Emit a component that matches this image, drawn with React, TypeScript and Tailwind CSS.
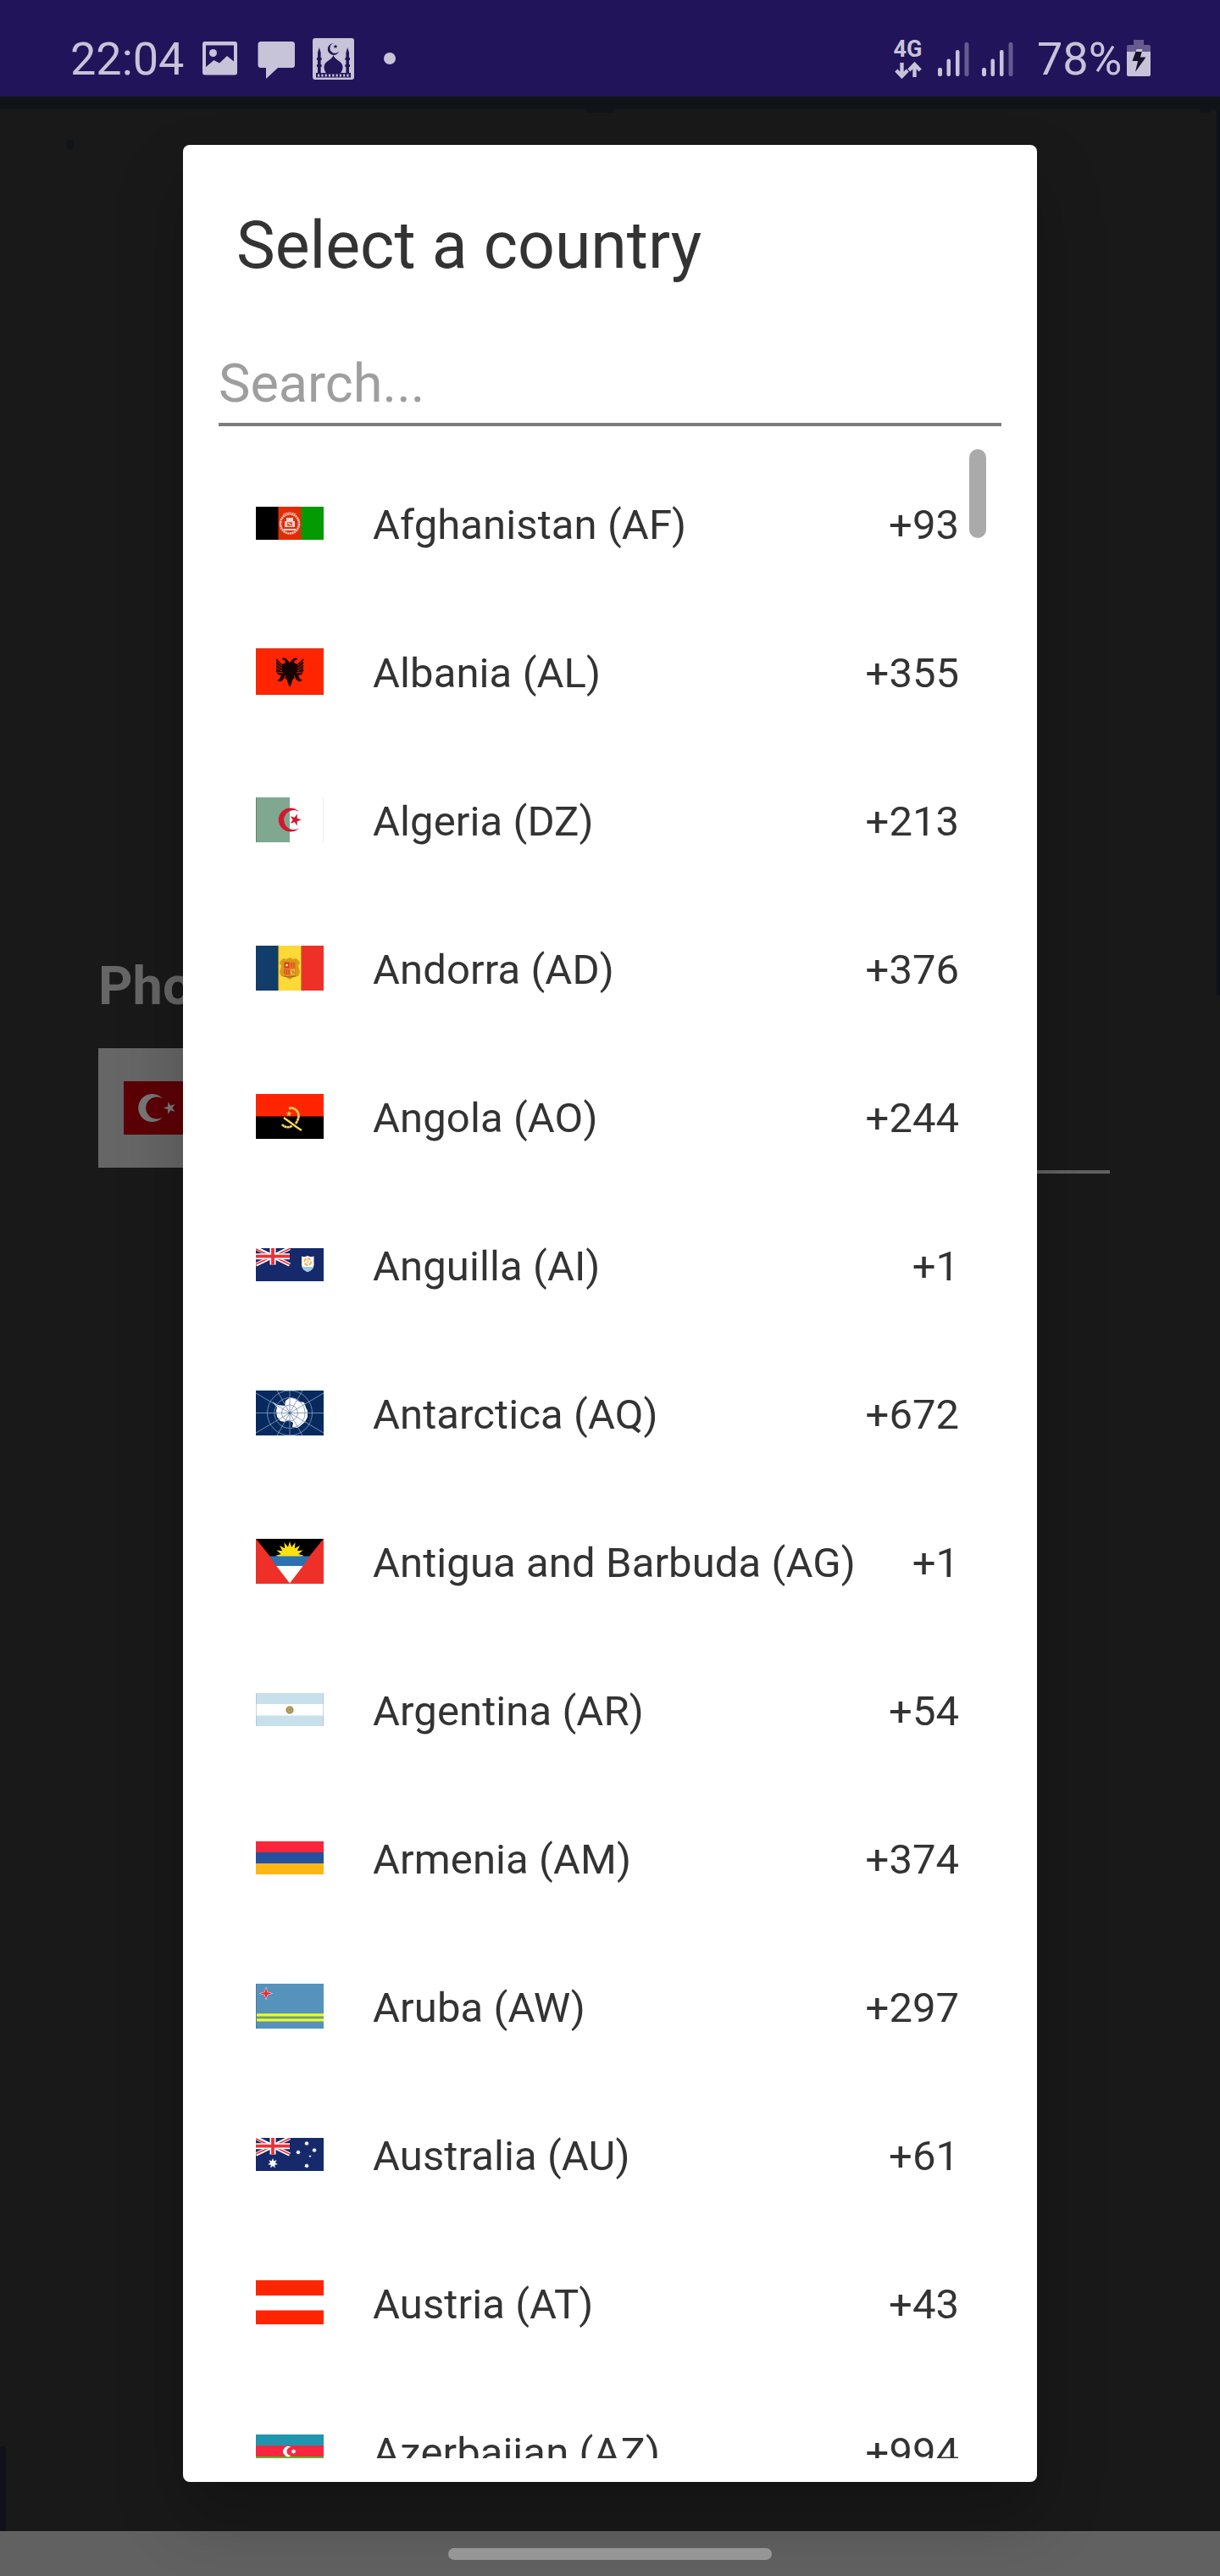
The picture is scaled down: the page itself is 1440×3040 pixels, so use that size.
import React from "react";

const star = (cx: number, cy: number, r: number, n = 5, inner = 0.4, rot = -90) =>
  Array.from({ length: n * 2 }, (_, i) => {
    const a = ((rot + (i * 180) / n) * Math.PI) / 180;
    const q = i % 2 ? r * inner : r;
    return `${(cx + q * Math.cos(a)).toFixed(2)},${(cy + q * Math.sin(a)).toFixed(2)}`;
  }).join(" ");

const UnionJack = () => (
  <g>
    <path d="M0 0H40V19.5H0Z" fill="#15296b" />
    <path d="M0 0L40 19.5M40 0L0 19.5" stroke="#fff" strokeWidth="4.6" />
    <path d="M0 1L17 9M23 11L40 19.2M40 .5L23 8.6M17 11L0 19" stroke="#ee3036" strokeWidth="1.6" />
    <path d="M20 0V19.5M0 9.7H40" stroke="#fff" strokeWidth="7" />
    <path d="M20 0V19.5M0 9.7H40" stroke="#ee3036" strokeWidth="3.8" />
  </g>
);

type Row = { name: string; code: string; h: number; flag: React.ReactNode };

const rows: Row[] = [
  {
    name: "Afghanistan (AF)", code: "+93", h: 39,
    flag: (
      <g>
        <path d="M0 0H27V39H0Z" fill="#000" />
        <path d="M26.5 0H54V39H26.5Z" fill="#e12d05" />
        <path d="M53.5 0H80V39H53.5Z" fill="#049a04" />
        <ellipse cx="40" cy="20" rx="11" ry="11.5" fill="none" stroke="#f3c5ba" strokeWidth="2.6" strokeDasharray="2 .6" />
        <path d="M32 9Q40 4.500 48 9" fill="none" stroke="#ec8a74" strokeWidth="1.4" strokeDasharray="1.500 .6" />
        <path d="M36 13H44V17H46V24H34V17H36ZM33 26H47V28H33Z" fill="#f6d5cc" />
        <path d="M37 18H43V23H37Z" fill="#e7583a" />
        <path d="M38 19L42 22" stroke="#fff" />
      </g>
    ),
  },
  {
    name: "Albania (AL)", code: "+355", h: 55,
    flag: (
      <g>
        <path d="M0 0H80V55H0Z" fill="#fe2500" />
        <path d="M0 .5H80" stroke="#c04a30" />
        <path
          d="M40 17L36 12.500L32 11L31 13.500L34 14L35 17L31 19L24 12L24 27L26 31L30 32L28 36L25 38L29 39.500L35 35L37 38L38 42L40 46L42 42L43 38L45 35L51 39.500L55 38L52 36L50 32L54 31L56 27V12L49 19L45 17L46 14L49 13.500L48 11L44 12.500Z"
          fill="#160200"
        />
        <path d="M24 15L31 21M24 19L31 24M24 23L31 27M25 28L32 29M56 15L49 21M56 19L49 24M56 23L49 27M55 28L48 29M35 32L32 39M45 32L48 39" stroke="#fe2500" strokeWidth=".9" />
      </g>
    ),
  },
  {
    name: "Algeria (DZ)", code: "+213", h: 53,
    flag: (
      <g>
        <path d="M0 0H40V53H0Z" fill="#80a78f" />
        <path d="M40 0H80V53H40Z" fill="#fff" />
        <path d="M.5 0V53" stroke="#5d8570" />
        <path d="M79.500 0V53" stroke="#ececec" />
        <path d="M51 17A14 14 0 1 0 51 36.200A11.500 11.500 0 1 1 51 17Z" fill="#d3172f" />
        <polygon points={star(46.5, 26.5, 7.300, 5, 0.38, 0)} fill="#d3172f" />
      </g>
    ),
  },
  {
    name: "Andorra (AD)", code: "+376", h: 53,
    flag: (
      <g>
        <path d="M0 0H27V53H0Z" fill="#123c69" />
        <path d="M26.500 0H54V53H26.500Z" fill="#fcd936" />
        <path d="M53.700 0H80V53H53.700Z" fill="#ee3028" />
        <path d="M26.600 0V53M53.800 0V53" stroke="#9a7a3c" strokeWidth=".8" />
        <path d="M30 17L33 15L36 16L40 14L44 16L47 15L50 17L52 20L50 24L52 31L50 36L45 37L40 40L35 37L30 36L28 31L30 24L28 20Z" fill="#d99a17" />
        <path d="M33 19H47V33L45 35H35L33 33Z" fill="#e87b25" />
        <path d="M34 20H39V26H34ZM34 28V33M36.500 28V34M39 28V34M42 20V26M45 20V26M42 29H46M43 32H46" fill="#d6401f" stroke="#cf4520" strokeWidth="1" />
        <path d="M41 28H46V34H41Z" fill="#f2c744" />
        <path d="M42 30H45M43 32H46" stroke="#b4421c" />
        <circle cx="36.500" cy="23" r="1.500" fill="#fbe38a" />
        <path d="M33 36Q40 38 47 36" fill="none" stroke="#9c5a10" />
      </g>
    ),
  },
  {
    name: "Angola (AO)", code: "+244", h: 53,
    flag: (
      <g>
        <path d="M0 0H80V27H0Z" fill="#fe2500" />
        <path d="M0 26.500H80V53H0Z" fill="#000" />
        <path d="M39 17C47 15 52 22 50 29C49 32 48 34 46.500 35M31 36C34 40 40 40 43 37.500" fill="none" stroke="#fddc55" strokeWidth="2.600" strokeDasharray="3 .3" />
        <path d="M33 28L48 39L54 43" fill="none" stroke="#fddc55" strokeWidth="2.200" />
        <polygon points={star(39, 23.500, 3.700)} fill="#fdc94b" />
      </g>
    ),
  },
  {
    name: "Anguilla (AI)", code: "+1", h: 39,
    flag: (
      <g>
        <path d="M0 0H80V39H0Z" fill="#15296b" />
        <UnionJack />
        <path d="M54 9.500Q57.500 11 61 9Q64.500 11 68.500 9.500V20Q67.500 26 61 28Q55 26 54 20Z" fill="#fff" />
        <path d="M54.300 22H68.200Q66.500 26.500 61 28Q56 26.500 54.300 22Z" fill="#9ccbe0" />
        <circle cx="61.200" cy="16" r="4" fill="none" stroke="#f6ac4a" strokeWidth="1.800" strokeDasharray="4.500 1.500" />
        <path d="M60 13L62 16L60 18" fill="none" stroke="#f6ac4a" />
      </g>
    ),
  },
  {
    name: "Antarctica (AQ)", code: "+672", h: 53,
    flag: (
      <g>
        <path d="M0 0H80V53H0Z" fill="#062a5f" />
        <path d="M19 13L26 17L34 18L35 12L40 8.500L46 9L51 13L57 14L59 20L61 24L61 31L58 37L52 42L49 44L43 43L44 38L39 35L34 37L29 36L25 31L24 24L25 20Z" fill="#fff" />
        <g fill="none" stroke="#7f95b8" strokeWidth=".9">
          <path d="M0 26.500H80M40 0V53M0 3L80 50M0 50L80 3M25 0L55 53M55 0L25 53" />
          <circle cx="40" cy="26.500" r="9.500" />
          <circle cx="40" cy="26.500" r="18" />
          <circle cx="40" cy="26.500" r="26.500" />
        </g>
        <circle cx="40" cy="26.500" r="1.500" fill="#4b6690" />
      </g>
    ),
  },
  {
    name: "Antigua and Barbuda (AG)", code: "+1", h: 53,
    flag: (
      <g>
        <path d="M0 0H80V53H0Z" fill="#ee3028" />
        <path d="M0 0H80L62.800 21H17Z" fill="#000" />
        <polygon points={star(40, 20, 17, 16, 0.62)} fill="#fde016" />
        <path d="M16 20.500H64L55.500 32H24.500Z" fill="#2a72b4" />
        <path d="M24 32H56L40 52.500Z" fill="#fff" />
        <path d="M0 0V53H40Z M80 0V53H40Z" fill="#ee3028" />
      </g>
    ),
  },
  {
    name: "Argentina (AR)", code: "+54", h: 39,
    flag: (
      <g>
        <path d="M0 0H80V39H0Z" fill="#c8dfec" />
        <path d="M0 13H80V26.500H0Z" fill="#fff" />
        <path d="M.5 0V39M79.500 0V39" stroke="#a4bac6" strokeOpacity=".6" />
        <circle cx="40" cy="20" r="4.600" fill="#9c8a4e" stroke="#d8cfae" strokeWidth=".8" />
        <circle cx="40" cy="20" r="2.200" fill="none" stroke="#cdbf84" />
      </g>
    ),
  },
  {
    name: "Armenia (AM)", code: "+374", h: 39,
    flag: (
      <g>
        <path d="M0 0H80V13H0Z" fill="#f9263b" />
        <path d="M0 13H80V26.500H0Z" fill="#24519f" />
        <path d="M0 26.300H80V39H0Z" fill="#fdb714" />
      </g>
    ),
  },
  {
    name: "Aruba (AW)", code: "+297", h: 53,
    flag: (
      <g>
        <path d="M0 0H80V53H0Z" fill="#5592bc" />
        <path d="M0 35.300H80V38.500H0ZM0 41.200H80V44.500H0Z" fill="#f2fb1b" />
        <path d="M0 39.500H80" stroke="#83a85e" />
        <path d="M.5 0V53" stroke="#477a9e" />
        <polygon points={star(12, 11.500, 8.500, 4, 0.32)} fill="#f2d5dc" />
        <polygon points={star(12, 11.500, 6.800, 4, 0.32)} fill="#ee2a2f" />
      </g>
    ),
  },
  {
    name: "Australia (AU)", code: "+61", h: 39,
    flag: (
      <g>
        <path d="M0 0H80V39H0Z" fill="#15296b" />
        <UnionJack />
        <g fill="#fff">
          <polygon points={star(20, 30, 6, 7, 0.5)} />
          <polygon points={star(60, 6.500, 2.900, 7, 0.6)} />
          <polygon points={star(50, 17, 2.900, 7, 0.6)} />
          <polygon points={star(69, 14.500, 2.900, 7, 0.6)} />
          <polygon points={star(64, 21.500, 1.800)} />
          <polygon points={star(60, 33, 2.900, 7, 0.6)} />
        </g>
      </g>
    ),
  },
  {
    name: "Austria (AT)", code: "+43", h: 53,
    flag: (
      <g>
        <path d="M0 0H80V53H0Z" fill="#fff" />
        <path d="M0 0H80V18H0ZM0 35.500H80V52H0Z" fill="#fe2500" />
      </g>
    ),
  },
  {
    name: "Azerbaijan (AZ)", code: "+994", h: 39,
    flag: (
      <g>
        <path d="M0 0H80V13H0Z" fill="#2095ae" />
        <path d="M0 13H80V26.300H0Z" fill="#fa2540" />
        <path d="M0 26H80V39H0Z" fill="#5cb52c" />
        <path d="M41.500 15A6 6 0 1 0 41.500 25A5 5 0 1 1 41.500 15Z" fill="#fff" />
        <polygon points={star(44.500, 20, 3, 8, 0.6)} fill="#fff" />
      </g>
    ),
  },
];

const StatusLeft = () => (
  <svg className="ml-[19px] h-[60px] w-[240px]" viewBox="235 40 240 60" fill="#c7c3d8">
    <path fillRule="evenodd" d="M242 49H277Q280 49 280 52V85.500Q280 88.500 277 88.500H242Q239 88.500 239 85.500V52Q239 49 242 49ZM243 53.500V79L252.500 71L259 74.500L268 66L276 72.500V53.500Z" />
    <circle cx="251.500" cy="62.500" r="4.500" />
    <path d="M308 49H344.500Q348 49 348 52.500V76.500Q348 80 344.500 80H328L314 93V80H308Q304.500 80 304.500 76.500V52.500Q304.500 49 308 49Z" />
    <rect x="369" y="45" width="49" height="49" rx="3" />
    <g fill="#23155a">
      <path fillRule="evenodd" d="M394 51A7 7 0 1 0 400.500 60A6 6 0 1 1 394 51Z" />
      <polygon points={star(396, 55, 2.800)} />
      <path d="M393.500 65C395 71 404.500 72 404.500 79C404.500 83 403 84.500 402 86.500H385C384 84.500 382.500 83 382.500 79C382.500 72 392 71 393.500 65Z" />
      <path d="M376.800 56L378.600 62V68H379.600V71H378.600V76H379.600V79H378.600V87H375V79H374V76H375V71H374V68H375V62ZM410.200 56L412 62V68H413V71H412V76H413V79H412V87H408.400V79H407.400V76H408.400V71H407.400V68H408.400V62Z" />
      <path d="M373 86H414V91.500H373Z" />
    </g>
    <path d="M375 89H412" stroke="#c7c3d8" strokeWidth="3" strokeDasharray="2.200 2.100" />
    <circle cx="460" cy="69" r="7" />
  </svg>
);

const Bars = () => (
  <svg className="mt-[49px] h-[41px] w-[37px]" viewBox="0 0 37 41" fill="#c7c3d8">
    <rect x="0" y="31" width="5" height="10" rx="2" />
    <rect x="10.500" y="20.500" width="4.500" height="20.500" rx="2" />
    <rect x="21" y="10" width="4.500" height="31" rx="2" />
    <rect x="31.500" y="1" width="5" height="40" rx="2" fill="#665a8e" />
  </svg>
);

export default function App() {
  return (
    <div className="relative flex h-[3040px] w-[1440px] flex-col overflow-hidden bg-[#191919] font-['Roboto',sans-serif]">
      <header className="flex h-[114px] shrink-0 items-start bg-[#21145b] text-[#c7c3d8]">
        <div className="mt-[40px] flex items-center pl-[83px]">
          <span className="w-[133px] text-[54px] leading-[60px] whitespace-nowrap">22:04</span>
          <StatusLeft />
        </div>
        <div className="ml-auto flex pr-[82px]">
          <div className="mr-[19px] flex w-[33px] flex-col items-center pt-[46px]">
            <span className="text-[27px] leading-[25px] font-bold whitespace-nowrap">4G</span>
            <svg className="mt-0.5 h-[20px] w-[32px]" viewBox="0 0 32 20" fill="none" stroke="#c7c3d8" strokeWidth="4.400">
              <path d="M8.500 1V17M1.800 10L8.500 17L15.200 10M23.500 18V3M16.800 10L23.500 3L30.200 10" />
            </svg>
          </div>
          <Bars />
          <div className="w-[15px]" />
          <Bars />
          <span className="mt-[40px] ml-[28px] w-[106px] text-[54px] leading-[60px] whitespace-nowrap">78%</span>
          <svg className="mt-[47px] h-[43px] w-[28px]" viewBox="0 0 28 43">
            <path d="M8 0H20V6H26Q28 6 28 8V14H0V8Q0 6 2 6H8Z" fill="#665a8e" />
            <path d="M0 14H28V41Q28 43 26 43H2Q0 43 0 41Z" fill="#c7c3d8" />
            <path d="M11.500 11H18.500L16 20.500H22.500L10 38L13 25H6.500Z" fill="#19142b" />
            <path d="M11.500 11H18.500L17.800 14H10.600Z" fill="#c7c3d8" />
          </svg>
        </div>
      </header>

      <main className="flex grow flex-col">
        <div className="flex h-[15px] items-end bg-[#101417]">
          <div className="-mb-1 ml-[692px] h-1 w-[33px] bg-[#101417]" />
          <div className="-mb-1 ml-auto mr-2.5 h-1 w-[14px] rounded-b-full bg-[#101417]" />
        </div>
        <div className="flex h-[1025px] flex-col items-end">
          <div className="-mb-[21px] w-1 grow bg-[#0e1118]" />
        </div>
        <div className="flex flex-col pl-[116px]">
          <h2 className="-mt-[27px] h-[83px] text-[63px] leading-[74px] font-bold text-[#666666]">Phone</h2>
          <div className="mt-[27px] flex pr-[130px]">
            <div className="flex h-[141px] w-[200px] items-center bg-[#666666] pl-[30px]">
              <svg className="h-[63px] w-[94px]" viewBox="0 0 94 63">
                <path d="M0 0H94V63H0Z" fill="#5c0006" />
                <path d="M46 20.500A16.500 16.500 0 1 0 46 42.500A13 13 0 1 1 46 20.500Z" fill="#777" />
                <polygon points={star(54.500, 31.500, 7.500, 5, 0.4, 180)} fill="#777" />
              </svg>
            </div>
            <div className="-mb-[7px] grow border-b-4 border-[#616161]" />
          </div>
        </div>
        <div className="mt-auto h-[100px] w-[7px] bg-[#0e1218]" />
      </main>

      <footer className="flex h-[53px] shrink-0 justify-center bg-[#616161]" />

      <div className="absolute top-[165px] left-[79px] h-[11px] w-[8px] rounded-full bg-[#0f141b]" />

      <section className="absolute top-[171px] left-[216px] flex h-[2758px] w-[1008px] flex-col rounded-[8px] bg-white text-[#333333] shadow-[0_40px_80px_rgba(0,0,0,0.22)]">
        <h1 className="h-[164px] pt-[73px] pl-[63px] text-[77px] leading-[92px] whitespace-nowrap">Select a country</h1>
        <div className="mx-[42px] mt-[78px] h-[90px] border-b-4 border-[#7c7c7c] text-[63px] leading-[80px] text-[#9e9e9e]">
          Search...
        </div>
        <div className="relative mt-[27px] h-[2371px] overflow-hidden">
          {rows.map((r) => (
            <div key={r.name} className="flex h-[175px] items-center pr-[92px] pl-[86px] text-[49px]">
              <svg className="mr-[58px] w-[80px] shrink-0" height={r.h} viewBox={`0 0 80 ${r.h}`}>
                {r.flag}
              </svg>
              <span className="pt-1 tracking-[0.1px] whitespace-nowrap">{r.name}</span>
              <span className="ml-auto pt-1">{r.code}</span>
            </div>
          ))}
          <div className="absolute top-0 left-[928px] h-[105px] w-[20px] rounded-full bg-[#aaaaaa]" />
        </div>
      </section>

      <div className="absolute top-[3007px] left-[529px] h-[14px] w-[382px] rounded-full bg-[#969696]" />
    </div>
  );
}
